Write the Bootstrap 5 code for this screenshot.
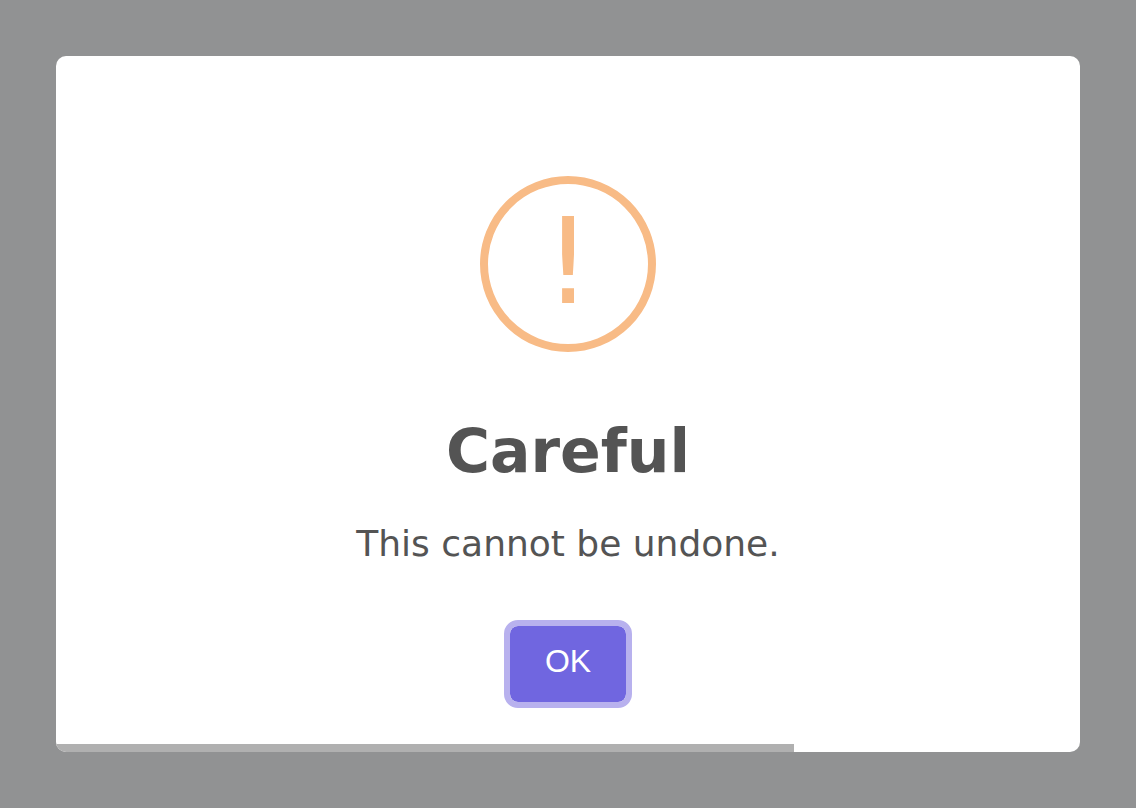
<!DOCTYPE html>
<html lang="en">
<head>
<meta charset="utf-8">
<title>Careful</title>
<link href="https://cdn.jsdelivr.net/npm/bootstrap@5.3.0/dist/css/bootstrap.min.css" rel="stylesheet">
<style>
html, body { height: 100%; }
body { background: #919293; font-family: "DejaVu Sans", sans-serif; overflow: hidden; }
.stage { height: 808px; padding: 56px; }
.dialog-box { width: 1024px; height: 696px; border: 0; border-radius: 10px; overflow: hidden; background: #fff; position: relative; }
.warn-icon { width: 176px; height: 176px; margin-top: 120px; border: 8px solid #f8bb86; border-radius: 50%; color: #f8bb86; font-size: 120px; line-height: 156px; }
.dialog-title { margin: 63px 0 0; font-size: 60px; line-height: 72px; font-weight: 700; color: #545454; }
.dialog-text { margin: 30px 0 0; font-size: 36px; line-height: 54px; color: #545454; }
.ok-btn { margin-top: 49px; width: 128px; height: 88px; padding: 0 0 6px; border: 6px solid #b8b1ee; border-radius: 14px; background: #7066e0; background-clip: padding-box; color: #fff; font-family: "Liberation Sans", Arial, sans-serif; font-size: 32px; line-height: 1; }
.ok-btn:hover { background: #7066e0; border-color: #b8b1ee; color: #fff; }
.timer-track { position: absolute; left: 0; bottom: 0; height: 8px; background: #b0b0b0; }
</style>
</head>
<body>
<div class="stage">
  <div class="card dialog-box d-flex flex-column align-items-center text-center">
    <div class="warn-icon d-flex justify-content-center flex-shrink-0">!</div>
    <h2 class="dialog-title">Careful</h2>
    <p class="dialog-text">This cannot be undone.</p>
    <button type="button" class="btn ok-btn">OK</button>
    <div class="timer-track" style="width: 738px"></div>
  </div>
</div>
<script src="https://cdn.jsdelivr.net/npm/bootstrap@5.3.0/dist/js/bootstrap.bundle.min.js"></script>
</body>
</html>
